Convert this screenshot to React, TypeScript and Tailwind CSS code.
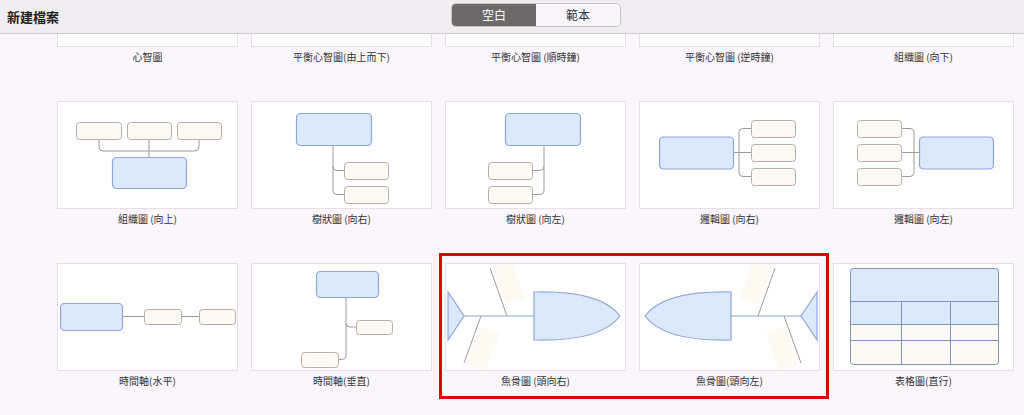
import React from 'react';

const SMALL = { fill: '#fdfaf3', stroke: '#b9adab' };
const BIG = { fill: '#dce8fb', stroke: '#8fa6dc' };
const LINE = '#a39797';

function Small({ x, y, w, h }: { x: number; y: number; w: number; h: number }) {
  return <rect x={x + 0.5} y={y + 0.5} width={w} height={h} rx={3} fill={SMALL.fill} stroke={SMALL.stroke} strokeWidth={1} />;
}

function Big({ x, y, w, h }: { x: number; y: number; w: number; h: number }) {
  return <rect x={x + 0.5} y={y + 0.5} width={w} height={h} rx={4} fill={BIG.fill} stroke={BIG.stroke} strokeWidth={1.2} />;
}

function OrgUp() {
  return (
    <g>
      <path d="M42 38 V46 Q42 50 46 50 H138 Q142 50 142 46 V38 M92 38 V56" fill="none" stroke={LINE} />
      <Small x={19} y={21} w={45} h={17} />
      <Small x={70} y={21} w={44} h={17} />
      <Small x={120} y={21} w={44} h={17} />
      <Big x={55} y={56} w={74} h={31} />
    </g>
  );
}

function TreeRight() {
  return (
    <g>
      <path d="M82 44 V89.5 Q82 93.5 86 93.5 H93 M82 65.5 Q82 69.5 86 69.5 H93" fill="none" stroke={LINE} />
      <Big x={45} y={12} w={75} h={32} />
      <Small x={93} y={61} w={44} h={17} />
      <Small x={93} y={85} w={44} h={17} />
    </g>
  );
}

function LogicRight() {
  return (
    <g>
      <path d="M94 51.5 H112 M112 27.5 H104 Q100 27.5 100 31.5 V71.5 Q100 75.5 104 75.5 H112" fill="none" stroke={LINE} />
      <Big x={20} y={35.5} w={74} h={32} />
      <Small x={112} y={19} w={44} h={17} />
      <Small x={112} y={43} w={44} h={17} />
      <Small x={112} y={67} w={44} h={17} />
    </g>
  );
}

function TimelineH() {
  return (
    <g>
      <path d="M65 53.5 H87 M124 53.5 H142" fill="none" stroke={LINE} />
      <Big x={3} y={40} w={62} h={27} />
      <Small x={87} y={46} w={37} h={15} />
      <Small x={142} y={46} w={36} h={15} />
    </g>
  );
}

function TimelineV() {
  return (
    <g>
      <path d="M95 34 V92 Q95 96.5 90.5 96.5 H87 M95 60 Q95 64 99 64 H105" fill="none" stroke={LINE} />
      <Big x={65} y={8} w={62} h={26} />
      <Small x={105} y={57} w={36} h={14} />
      <Small x={50} y={89} w={37} h={15} />
    </g>
  );
}

function FishRight() {
  return (
    <g>
      <polygon points="47.8,4 66.7,-2.7 80.1,35 61.2,41.7" fill="#fefaf2" />
      <polygon points="35.4,63.4 54.2,70.2 40.6,107.8 21.8,101" fill="#fefaf2" />
      <line x1={45} y1={5} x2={62} y2={53} stroke={LINE} />
      <line x1={36} y1={53} x2={19} y2={100} stroke={LINE} />
      <line x1={19} y1={53} x2={89} y2={53} stroke={BIG.stroke} />
      <polygon points="3,29 19,53 3,77" fill={BIG.fill} stroke={BIG.stroke} strokeWidth={1.2} />
      <path d="M89 29 C125 28 160 33 175 53 C160 73 125 78 89 77 Z" fill={BIG.fill} stroke={BIG.stroke} strokeWidth={1.2} />
    </g>
  );
}

function Table() {
  const s = '#7f93c9';
  return (
    <g>
      <rect x={17.5} y={5.5} width={148} height={56} fill={BIG.fill} />
      <rect x={17.5} y={61.5} width={148} height={40} fill={SMALL.fill} />
      <path d="M17.5 38.5 H165.5 M17.5 61.5 H165.5 M17.5 77.5 H165.5 M68.5 38.5 V101.5 M117.5 38.5 V101.5" fill="none" stroke={s} />
      <rect x={17.5} y={5.5} width={148} height={96} rx={3} fill="none" stroke={s} />
    </g>
  );
}

const mirror = (node: React.ReactNode) => <g transform="translate(181 0) scale(-1 1)">{node}</g>;

const cards: { label: string; art: React.ReactNode }[] = [
  { label: '心智圖', art: null },
  { label: '平衡心智圖(由上而下)', art: null },
  { label: '平衡心智圖 (順時鐘)', art: null },
  { label: '平衡心智圖 (逆時鐘)', art: null },
  { label: '組織圖 (向下)', art: null },
  { label: '組織圖 (向上)', art: <OrgUp /> },
  { label: '樹狀圖 (向右)', art: <TreeRight /> },
  { label: '樹狀圖 (向左)', art: mirror(<TreeRight />) },
  { label: '邏輯圖 (向右)', art: <LogicRight /> },
  { label: '邏輯圖 (向左)', art: mirror(<LogicRight />) },
  { label: '時間軸(水平)', art: <TimelineH /> },
  { label: '時間軸(垂直)', art: <TimelineV /> },
  { label: '魚骨圖 (頭向右)', art: <FishRight /> },
  { label: '魚骨圖(頭向左)', art: mirror(<FishRight />) },
  { label: '表格圖(直行)', art: <Table /> },
];

export default function App() {
  return (
    <div className="relative w-[1024px] h-[415px] overflow-hidden bg-[#fbf6fb] font-['Noto_Sans_CJK_TC','Noto_Sans',sans-serif]">
      {/* Header */}
      <header className="h-[34px] bg-[#efedef] border-b border-[#cbc9cb] grid grid-cols-[444px_170px_1fr] items-center pl-[7px]">
        <h1 className="text-[13px] font-bold text-[#222] leading-none">新建檔案</h1>
        <div className="flex h-[24px] mt-[-3px] rounded-[5px] border border-[#c4c2c4] overflow-hidden text-[12px]">
          <div className="flex-1 bg-[#6b696a] text-white flex items-center justify-center">空白</div>
          <div className="flex-1 bg-[#f8f6f8] text-[#333] flex items-center justify-center">範本</div>
        </div>
      </header>

      {/* Templates */}
      <div className="h-[381px] overflow-hidden">
        <div className="mt-[-95px] pl-[57px] grid grid-cols-[repeat(5,181px)] gap-x-[13px]">
          {cards.map((c, i) => (
            <div key={i} className="flex flex-col">
              <div className="h-[108px] bg-white border border-[#e6dfe6]">
                <svg width="179" height="106" viewBox="1 1 179 106" className="block overflow-hidden">
                  {c.art}
                </svg>
              </div>
              <div className="h-[54px] text-center text-[10px] leading-[20px] text-[#333]">{c.label}</div>
            </div>
          ))}
        </div>
      </div>

      {/* highlight annotation */}
      <div className="absolute left-[439px] top-[253px] w-[390px] h-[146px] border-[3px] border-[#e60000]" />
    </div>
  );
}
